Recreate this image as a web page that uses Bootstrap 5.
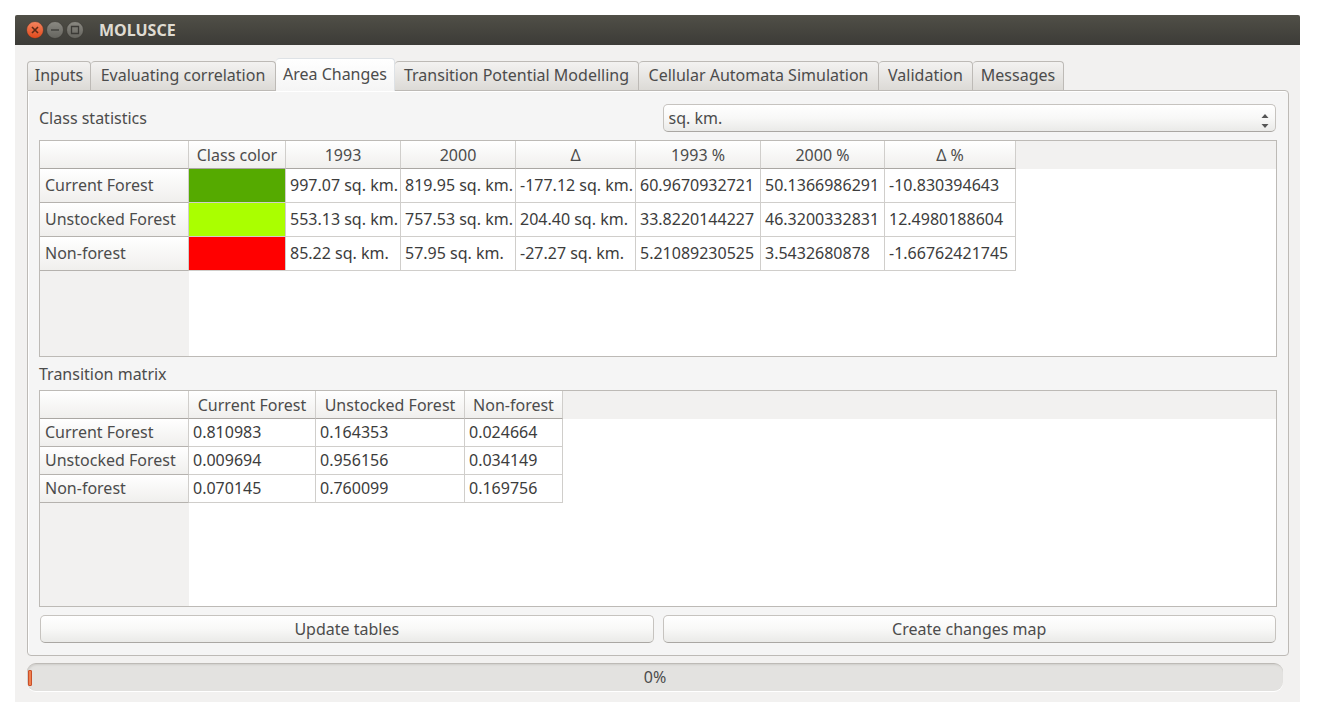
<!DOCTYPE html>
<html lang="en">
<head>
<meta charset="utf-8">
<meta name="viewport" content="width=device-width, initial-scale=1">
<title>MOLUSCE</title>
<link rel="stylesheet" href="https://cdn.jsdelivr.net/npm/bootstrap@5.3.0/dist/css/bootstrap.min.css">
<style>
  :root { --edge: #bdbab6; --ink: #4c4c4c; --face: #f2f1f0; }
  body { font: 16px/20px "Noto Sans", "Open Sans", sans-serif; color: var(--ink); background: #fff; padding: 15px 17px 0 15px; }
  .app-window { background: var(--face); }
  .title-bar { height: 30px; padding: 0 11px; background: linear-gradient(#504f47, #3c3b37); border-radius: 2px 2px 0 0; }
  .title-bar h1 { font-size: 16px; line-height: 20px; font-weight: 700; color: #dfdbd2; margin-left: 15px; }
  .win-btns { gap: 2px; }
  .win-btn { width: 18px; height: 18px; padding: 0; border: 0; background: none; }
  .win-btn svg { display: block; }
  .main-area { padding: 13px 11px 12px 12px; }

  .app-tabs { border: 0; }
  .app-tabs .nav-link { height: 29px; padding: 3px 0; width: 100%; color: var(--ink); text-align: center; white-space: nowrap;
    border: 1px solid var(--edge); border-left-width: 0; border-bottom: 0; border-radius: 4px 4px 0 0; background: linear-gradient(#f3f2f1, #dcdad6); margin: 0; }
  .app-tabs .nav-item:first-child .nav-link { border-left-width: 1px; }
  .app-tabs .nav-link.active { height: 33px; padding-top: 5px; margin-bottom: -1px; background: linear-gradient(#fff, #f5f5f5); position: relative; color: var(--ink); }
  .w-in { width: 64px; } .w-ev { width: 185px; } .w-ar { width: 119px; } .w-tr { width: 244px; }
  .w-ce { width: 240px; } .w-va { width: 94px; } .w-me { width: 91px; }

  .tab-panel { background: #f5f5f5; border: 1px solid var(--edge); border-radius: 0 4px 4px 4px; padding: 13px 11px 12px 11px; box-shadow: inset 1px 1px #fff; }
  .tab-panel h2 { font-size: 16px; line-height: 20px; font-weight: 400; margin: 7px 0 6px; }
  .pair { display: grid; grid-template-columns: 1fr 1fr; column-gap: 9px; padding: 0 1px; align-items: center; }
  .pair label { margin-left: -1px; }
  .raised, .raised:hover, .raised:focus { height: 28px; padding: 3px 5px; font-size: 16px; line-height: 20px; color: var(--ink);
    border: 1px solid #c6c3bf; border-bottom-color: #aaa7a3; border-radius: 5px; background-color: #f5f5f4; }
  .raised { background-image: linear-gradient(#fff, #f8f8f7 50%, #eaeae8); }
  .unit-select.raised { background-image: url("data:image/svg+xml,%3Csvg xmlns='http://www.w3.org/2000/svg' width='8' height='14'%3E%3Cpath d='M4 0 7.500 4H.5zM4 14 .5 10h7z' fill='%23555'/%3E%3C/svg%3E"), linear-gradient(#fff, #f8f8f7 50%, #eaeae8);
    background-position: right 6px bottom 3px, 0 0; background-size: 8px 14px, 100% 100%; background-repeat: no-repeat; }

  .grid-box { flex: 1 1 0; min-height: 217px; border: 1px solid var(--edge);
    background: linear-gradient(var(--face), var(--face)) 0 0 / 100% 28px no-repeat, linear-gradient(var(--face), var(--face)) 0 0 / 149px 100% no-repeat, #fff; overflow: auto; }
  .data-grid { table-layout: fixed; width: 0; border-collapse: separate; border-spacing: 0; white-space: nowrap; }
  .data-grid th, .data-grid td { font-weight: 400; height: 28px; padding: 0 3px 1px 4px; border-right: 1px solid #d0cecb; border-bottom: 1px solid #d0cecb; vertical-align: middle; }
  .data-grid td { background: #fff; color: #3c3c3c; }
  .data-grid th { background: linear-gradient(#fff, #f0efed); padding: 0 5px 1px; color: var(--ink); }
  .data-grid thead th, .data-grid thead td { text-align: center; border-bottom-color: #aaa7a3; padding: 0; }
  .data-grid thead td { background: linear-gradient(#fff, #f0efed); }
  .data-grid tbody th { border-bottom-color: #b5b2ae; }
  .stats-grid tbody tr > * { height: 34px; }
  .stats-grid td.swatch { background: var(--c); }

  .status-bar { height: 28px; padding-bottom: 1px; margin: 7px 6px 0 0; border-radius: 9px; background: #e3e2e0; border-top: 1px solid var(--edge); box-shadow: inset 1px 1px 2px #cfcdca, 0 1px #fff; position: relative; }
  .status-bar .chunk { position: absolute; left: 1px; top: 6px; width: 4px; height: 16px; border: 1px solid #c9502a; border-radius: 1px; background: #f0804f; }
</style>
</head>
<body class="d-flex flex-column min-vh-100">
<div class="app-window d-flex flex-column flex-grow-1">
  <header class="title-bar d-flex align-items-center">
    <div class="win-btns d-flex">
      <button type="button" class="win-btn" aria-label="Close"><svg width="18" height="18" viewBox="0 0 18 18"><defs><linearGradient id="og" x2="0" y2="1"><stop stop-color="#f58560"/><stop offset="1" stop-color="#e0481a"/></linearGradient></defs><circle cx="9" cy="9" r="8.500" fill="url(#og)" stroke="#39352f" stroke-width=".6"/><path d="M6 6l6 6M12 6l-6 6" stroke="#5c2a16" stroke-width="1.600"/></svg></button>
      <button type="button" class="win-btn" aria-label="Minimize"><svg width="18" height="18" viewBox="0 0 18 18"><defs><linearGradient id="gg" x2="0" y2="1"><stop stop-color="#8b8a83"/><stop offset="1" stop-color="#64635d"/></linearGradient></defs><circle cx="9" cy="9" r="8.500" fill="url(#gg)" stroke="#35342f" stroke-width=".6"/><path d="M5 9h8" stroke="#3c3b37" stroke-width="1.300"/></svg></button>
      <button type="button" class="win-btn" aria-label="Maximize"><svg width="18" height="18" viewBox="0 0 18 18"><circle cx="9" cy="9" r="8.500" fill="url(#gg)" stroke="#35342f" stroke-width=".6"/><path d="M5.500 5.500h7v7h-7z" fill="none" stroke="#3c3b37" stroke-width="1.300"/></svg></button>
    </div>
    <h1 class="mb-0">MOLUSCE</h1>
  </header>

  <main class="main-area d-flex flex-column flex-grow-1">
    <ul class="nav nav-tabs app-tabs align-items-end">
      <li class="nav-item w-in"><a class="nav-link" href="#inputs">Inputs</a></li>
      <li class="nav-item w-ev"><a class="nav-link" href="#correlation">Evaluating correlation</a></li>
      <li class="nav-item w-ar"><a class="nav-link active" aria-current="page" href="#area">Area Changes</a></li>
      <li class="nav-item w-tr"><a class="nav-link" href="#potential">Transition Potential Modelling</a></li>
      <li class="nav-item w-ce"><a class="nav-link" href="#automata">Cellular Automata Simulation</a></li>
      <li class="nav-item w-va"><a class="nav-link" href="#validation">Validation</a></li>
      <li class="nav-item w-me"><a class="nav-link" href="#messages">Messages</a></li>
    </ul>

    <section class="tab-panel d-flex flex-column flex-grow-1" id="area">
      <div class="pair mb-2">
        <label for="unit">Class statistics</label>
        <select class="form-select raised unit-select" id="unit"><option>sq. km.</option></select>
      </div>
      <div class="grid-box">
        <table class="data-grid stats-grid">
          <colgroup><col style="width:149px"><col style="width:97px"><col style="width:115px"><col style="width:115px"><col style="width:120px"><col style="width:125px"><col style="width:124px"><col style="width:131px"></colgroup>
          <thead><tr><td></td><th scope="col">Class color</th><th scope="col">1993</th><th scope="col">2000</th><th scope="col">Δ</th><th scope="col">1993 %</th><th scope="col">2000 %</th><th scope="col">Δ %</th></tr></thead>
          <tbody>
            <tr><th scope="row">Current Forest</th><td class="swatch" style="--c:#55aa00"></td><td>997.07 sq. km.</td><td>819.95 sq. km.</td><td>-177.12 sq. km.</td><td>60.9670932721</td><td>50.1366986291</td><td>-10.830394643</td></tr>
            <tr><th scope="row">Unstocked Forest</th><td class="swatch" style="--c:#aaff00"></td><td>553.13 sq. km.</td><td>757.53 sq. km.</td><td>204.40 sq. km.</td><td>33.8220144227</td><td>46.3200332831</td><td>12.4980188604</td></tr>
            <tr><th scope="row">Non-forest</th><td class="swatch" style="--c:#ff0000"></td><td>85.22 sq. km.</td><td>57.95 sq. km.</td><td>-27.27 sq. km.</td><td>5.21089230525</td><td>3.5432680878</td><td>-1.66762421745</td></tr>
          </tbody>
        </table>
      </div>
      <h2>Transition matrix</h2>
      <div class="grid-box">
        <table class="data-grid">
          <colgroup><col style="width:149px"><col style="width:127px"><col style="width:149px"><col style="width:98px"></colgroup>
          <thead><tr><td></td><th scope="col">Current Forest</th><th scope="col">Unstocked Forest</th><th scope="col">Non-forest</th></tr></thead>
          <tbody>
            <tr><th scope="row">Current Forest</th><td>0.810983</td><td>0.164353</td><td>0.024664</td></tr>
            <tr><th scope="row">Unstocked Forest</th><td>0.009694</td><td>0.956156</td><td>0.034149</td></tr>
            <tr><th scope="row">Non-forest</th><td>0.070145</td><td>0.760099</td><td>0.169756</td></tr>
          </tbody>
        </table>
      </div>
      <div class="pair mt-2">
        <button type="button" class="btn raised">Update tables</button>
        <button type="button" class="btn raised">Create changes map</button>
      </div>
    </section>

    <div class="status-bar d-flex align-items-center justify-content-center" role="progressbar" aria-label="Progress" aria-valuenow="0" aria-valuemin="0" aria-valuemax="100"><span class="chunk"></span>0%</div>
  </main>
</div>
<script src="https://cdn.jsdelivr.net/npm/bootstrap@5.3.0/dist/js/bootstrap.bundle.min.js"></script>
</body>
</html>
